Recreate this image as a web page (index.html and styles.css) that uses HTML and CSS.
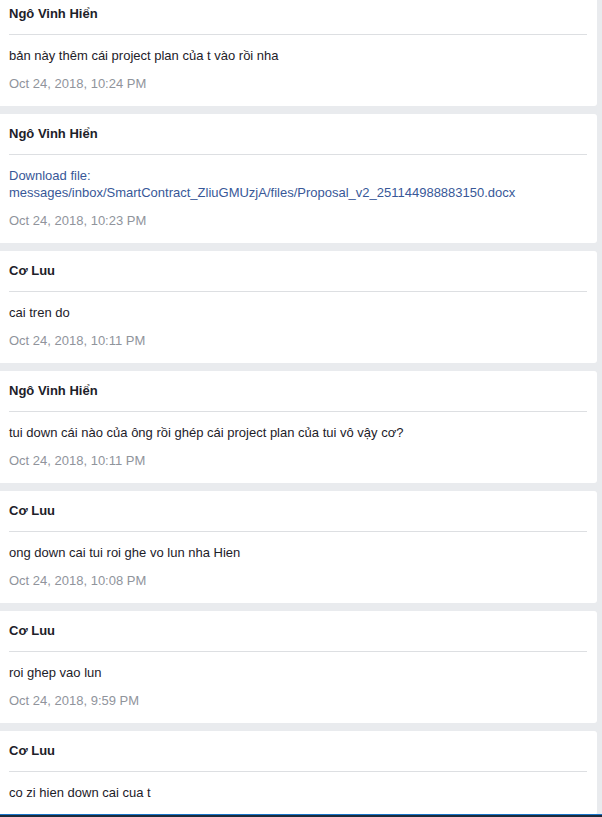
FILE: index.html
```html
<!DOCTYPE html>
<html lang="vi">
<head>
<meta charset="utf-8">
<link rel="stylesheet" href="styles.css">
</head>
<body>
<div class="list">
  <div class="card">
    <div class="name">Ngô Vinh Hiển</div>
    <div class="text">bản này thêm cái project plan của t vào rồi nha</div>
    <div class="time">Oct 24, 2018, 10:24 PM</div>
  </div>
  <div class="card">
    <div class="name">Ngô Vinh Hiển</div>
    <div class="text"><a class="link" href="#">Download file:<br>messages/inbox/SmartContract_ZliuGMUzjA/files/Proposal_v2_251144988883150.docx</a></div>
    <div class="time">Oct 24, 2018, 10:23 PM</div>
  </div>
  <div class="card">
    <div class="name">Cơ Luu</div>
    <div class="text">cai tren do</div>
    <div class="time">Oct 24, 2018, 10:11 PM</div>
  </div>
  <div class="card">
    <div class="name">Ngô Vinh Hiển</div>
    <div class="text">tui down cái nào của ông rồi ghép cái project plan của tui vô vậy cơ?</div>
    <div class="time">Oct 24, 2018, 10:11 PM</div>
  </div>
  <div class="card">
    <div class="name">Cơ Luu</div>
    <div class="text">ong down cai tui roi ghe vo lun nha Hien</div>
    <div class="time">Oct 24, 2018, 10:08 PM</div>
  </div>
  <div class="card">
    <div class="name">Cơ Luu</div>
    <div class="text">roi ghep vao lun</div>
    <div class="time">Oct 24, 2018, 9:59 PM</div>
  </div>
  <div class="card">
    <div class="name">Cơ Luu</div>
    <div class="text">co zi hien down cai cua t</div>
  </div>
</div>
<div class="bottombar"></div>
</body>
</html>
```

FILE: styles.css
```css
html, body {
  margin: 0;
  padding: 0;
  background: #e9ebee;
  overflow: hidden;
}
body {
  font-family: "Liberation Sans", Arial, sans-serif;
  font-size: 13px;
  line-height: 17px;
  color: #1d2129;
}
.list {
  margin-top: -6px;
  padding-right: 5px;
  display: flex;
  flex-direction: column;
  gap: 8px;
}
.card {
  background: #fff;
  border-radius: 0 3px 3px 0;
  padding: 11px 10px 14px 9px;
}
.name {
  font-weight: bold;
  padding-bottom: 12px;
  border-bottom: 1px solid #dddfe2;
}
.text {
  margin-top: 12px;
}
.link {
  color: #385898;
  text-decoration: none;
}
.time {
  margin-top: 11px;
  color: #90949c;
}
.bottombar {
  position: fixed;
  left: 0;
  right: 0;
  bottom: 0;
  height: 2px;
  border-top: 1px solid #1a73c8;
  background: #1c2a3a;
}
```
